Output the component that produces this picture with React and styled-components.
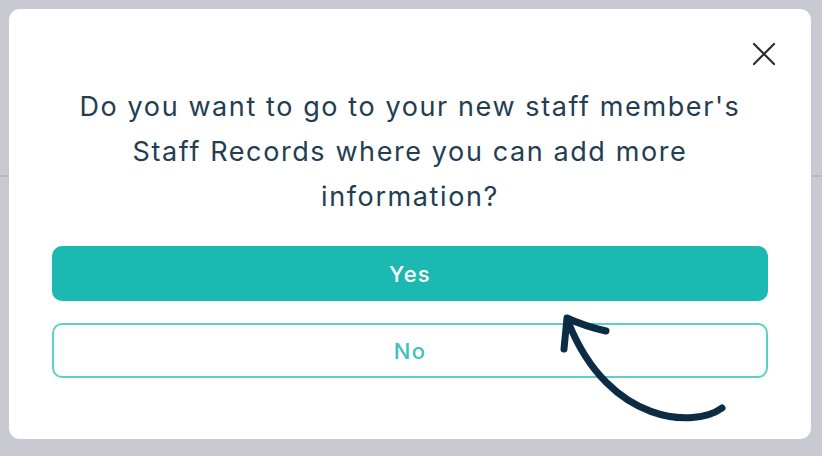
import React from "react";
import styled, { createGlobalStyle } from "styled-components";

const Global = createGlobalStyle`
  html, body { margin: 0; padding: 0; }
  body {
    width: 822px;
    height: 456px;
    overflow: hidden;
    background:
      linear-gradient(to bottom, transparent 175px, #b9b9c4 175px, #b9b9c4 177px, transparent 177px),
      #c9c9d3;
    font-family: "Inter", "Noto Sans", sans-serif;
  }
`;

const Backdrop = styled.div`
  box-sizing: border-box;
  width: 822px;
  height: 456px;
  padding: 9px 11px 17px 9px;
`;

const Dialog = styled.div`
  position: relative;
  box-sizing: border-box;
  height: 100%;
  background: #ffffff;
  border-radius: 11px;
  padding: 75px 43px 0 43px;
  display: flex;
  flex-direction: column;
  align-items: stretch;
`;

const Close = styled.button`
  position: absolute;
  top: 33px;
  right: 35px;
  width: 24px;
  height: 24px;
  padding: 0;
  border: 0;
  background: none;
  display: flex;
  align-items: center;
  justify-content: center;
`;

const Message = styled.p`
  margin: 0;
  text-align: center;
  color: #233d52;
  font-size: 27px;
  line-height: 45px;
  font-weight: 400;
  letter-spacing: 1.6px;
`;

const Actions = styled.div`
  margin-top: 27px;
  display: flex;
  flex-direction: column;
  gap: 22px;
`;

const Button = styled.button`
  box-sizing: border-box;
  height: 55px;
  border-radius: 10px;
  font-family: "Inter", "Noto Sans", sans-serif;
  font-size: 22px;
  font-weight: 500;
  letter-spacing: 1.2px;
  border: 2px solid ${(p) => (p.$primary ? "#1bb9b1" : "#5dd0c8")};
  background: ${(p) => (p.$primary ? "#1bb9b1" : "#ffffff")};
  color: ${(p) => (p.$primary ? "#ffffff" : "#3dc3ba")};
`;

const ArrowLayer = styled.svg`
  position: absolute;
  left: -9px;
  top: -9px;
  width: 822px;
  height: 456px;
  pointer-events: none;
`;

export default function App() {
  return (
    <>
      <Global />
      <Backdrop>
        <Dialog>
          <Close aria-label="Close">
            <svg width="24" height="24" viewBox="0 0 24 24">
              <path d="M2 2 L22 22 M22 2 L2 22" stroke="#2d2d2d" strokeWidth="2.2" strokeLinecap="round" fill="none" />
            </svg>
          </Close>
          <Message>
            Do you want to go to your new staff member's
            <br />
            Staff Records where you can add more
            <br />
            information?
          </Message>
          <Actions>
            <Button $primary>Yes</Button>
            <Button>No</Button>
          </Actions>
          <ArrowLayer viewBox="0 0 822 456">
            <path
              d="M722 408 C695 428 610 425 569 324"
              stroke="#0c2b44"
              strokeWidth="7"
              strokeLinecap="round"
              fill="none"
            />
            <path
              d="M564 349 L567 318 Q584 326 606 331"
              stroke="#0c2b44"
              strokeWidth="7"
              strokeLinecap="round"
              strokeLinejoin="round"
              fill="none"
            />
          </ArrowLayer>
        </Dialog>
      </Backdrop>
    </>
  );
}
